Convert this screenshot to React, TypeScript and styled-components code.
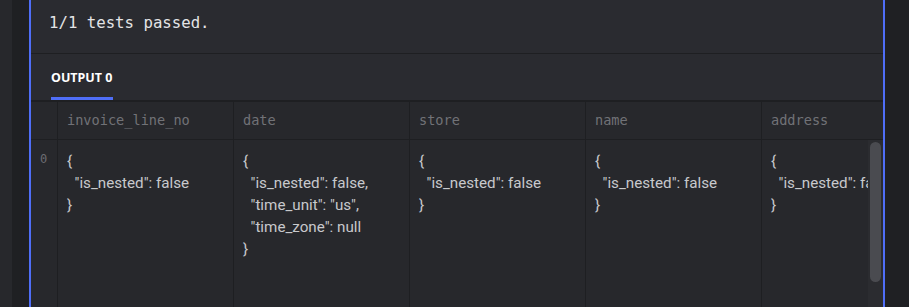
import React from "react";
import styled, { createGlobalStyle } from "styled-components";

const GlobalStyle = createGlobalStyle`
  html, body {
    margin: 0;
    padding: 0;
    background: #27282c;
    overflow: hidden;
  }
`;

const Page = styled.div`
  display: flex;
  height: 307px;
  width: 909px;
  overflow: hidden;
`;

const Gutter = styled.div<{ $w?: number; $bg: string }>`
  flex: ${(p) => (p.$w ? `0 0 ${p.$w}px` : "1 1 auto")};
  background: ${(p) => p.$bg};
`;

const Panel = styled.div`
  flex: 0 0 856px;
  box-sizing: border-box;
  border-left: 2px solid #4f6ef7;
  border-right: 2px solid #4f6ef7;
  background: #2a2b30;
  display: flex;
  flex-direction: column;
  overflow: hidden;
`;

const Result = styled.div`
  height: 54px;
  box-sizing: border-box;
  padding: 13px 0 0 18px;
  border-bottom: 1px solid #1e1f22;
  font-family: "DejaVu Sans Mono", monospace;
  font-size: 15.7px;
  line-height: 20px;
  color: #e4e4e6;
`;

const Tabs = styled.div`
  height: 48px;
  box-sizing: border-box;
  padding-left: 20px;
  display: flex;
  align-items: flex-end;
  border-bottom: 2px solid #1e1f22;
`;

const Tab = styled.div<{ $active?: boolean }>`
  font-family: "Noto Sans", sans-serif;
  font-weight: 700;
  font-size: 12.5px;
  color: ${(p) => (p.$active ? "#ffffff" : "#8a8b90")};
  padding: 0 0 11px;
  width: 62px;
  border-bottom: 3px solid ${(p) => (p.$active ? "#4f6ef7" : "transparent")};
`;

const TableArea = styled.div`
  flex: 1;
  position: relative;
  overflow: hidden;
  background: #27282c;
`;

const Grid = styled.div`
  display: grid;
  grid-template-columns: 27px repeat(5, 176px);
  grid-auto-rows: auto;
  width: max-content;
`;

const HeadCell = styled.div`
  height: 38px;
  box-sizing: border-box;
  padding: 0 9px 2px;
  display: flex;
  align-items: center;
  border-right: 1px solid #1e1f22;
  border-bottom: 1px solid #1e1f22;
  font-family: "DejaVu Sans Mono", monospace;
  font-size: 13.6px;
  color: #717277;
  white-space: nowrap;
`;

const IndexCell = styled.div`
  height: 170px;
  box-sizing: border-box;
  padding: 11px 0 0 9px;
  border-right: 1px solid #1e1f22;
  font-family: "DejaVu Sans Mono", monospace;
  font-size: 12px;
  line-height: 16px;
  color: #6c6d72;
`;

const ValueCell = styled.pre`
  margin: 0;
  height: 170px;
  box-sizing: border-box;
  padding: 10px 9px 0;
  border-right: 1px solid #1e1f22;
  font-family: Roboto, sans-serif;
  font-size: 15.2px;
  line-height: 22px;
  color: #c8c9cc;
  white-space: pre;
  overflow: hidden;
`;

const ScrollTrack = styled.div`
  position: absolute;
  right: 0;
  top: 38px;
  bottom: 0;
  width: 15px;
  background: #2b2c30;
`;

const ScrollThumb = styled.div`
  margin: 2px 0 0 2px;
  width: 11px;
  height: 140px;
  border-radius: 6px;
  background: #4a4b50;
`;

const columns = ["invoice_line_no", "date", "store", "name", "address"];

const row: Record<string, string> = {
  invoice_line_no: '{\n  "is_nested": false\n}',
  date: '{\n  "is_nested": false,\n  "time_unit": "us",\n  "time_zone": null\n}',
  store: '{\n  "is_nested": false\n}',
  name: '{\n  "is_nested": false\n}',
  address: '{\n  "is_nested": false\n}',
};

export default function App() {
  return (
    <>
      <GlobalStyle />
      <Page>
        <Gutter $w={12} $bg="#27282c" />
        <Gutter $w={17} $bg="#1f2023" />
        <Panel>
          <Result>1/1 tests passed.</Result>
          <Tabs>
            <Tab $active>OUTPUT 0</Tab>
          </Tabs>
          <TableArea>
            <Grid>
              <HeadCell />
              {columns.map((c) => (
                <HeadCell key={c}>{c}</HeadCell>
              ))}
              <IndexCell>0</IndexCell>
              {columns.map((c) => (
                <ValueCell key={c}>{row[c]}</ValueCell>
              ))}
            </Grid>
            <ScrollTrack>
              <ScrollThumb />
            </ScrollTrack>
          </TableArea>
        </Panel>
        <Gutter $bg="#1f2023" />
      </Page>
    </>
  );
}
